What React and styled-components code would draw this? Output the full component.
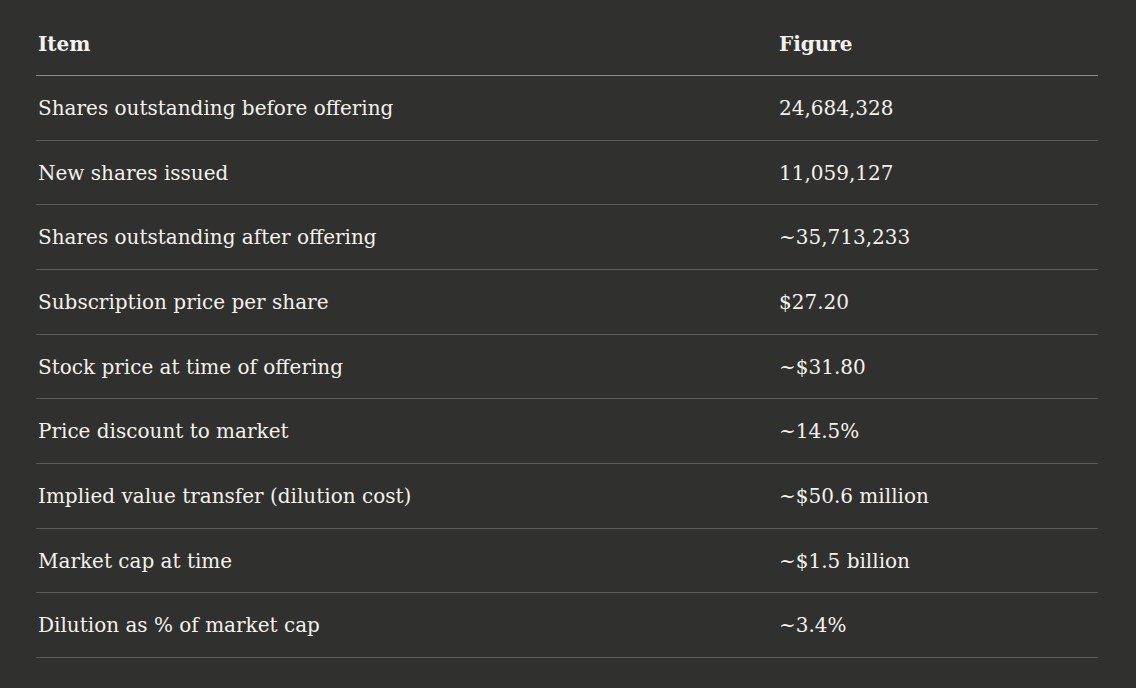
import React from 'react';
import styled, { createGlobalStyle } from 'styled-components';

const GlobalStyle = createGlobalStyle`
  html, body {
    margin: 0;
    padding: 0;
    background: #30302e;
  }
  body {
    font-family: "DejaVu Serif", "Liberation Serif", serif;
    color: #f4f2ec;
  }
`;

const Page = styled.div`
  min-height: 688px;
  padding: 11px 38px 0 36px;
  box-sizing: border-box;
`;

const Table = styled.table`
  width: 1062px;
  border-collapse: collapse;
  table-layout: fixed;
  font-size: 20px;
`;

const HeadCell = styled.th`
  text-align: left;
  font-weight: 700;
  padding: 17px 2px 15px;
  line-height: 32px;
  width: ${p => p.w || 'auto'};
  border-bottom: 1px solid #8d8c88;
`;

const Row = styled.tr`
  border-bottom: 1px solid #5c5b58;
`;

const Cell = styled.td`
  padding: 17px 2px 15px;
  line-height: 31.67px;
  font-weight: 400;
  white-space: nowrap;
`;

const rows = [
  ['Shares outstanding before offering', '24,684,328'],
  ['New shares issued', '11,059,127'],
  ['Shares outstanding after offering', '~35,713,233'],
  ['Subscription price per share', '$27.20'],
  ['Stock price at time of offering', '~$31.80'],
  ['Price discount to market', '~14.5%'],
  ['Implied value transfer (dilution cost)', '~$50.6 million'],
  ['Market cap at time', '~$1.5 billion'],
  ['Dilution as % of market cap', '~3.4%'],
];

export default function App() {
  return (
    <>
      <GlobalStyle />
      <Page>
        <Table>
          <thead>
            <tr>
              <HeadCell w="737px">Item</HeadCell>
              <HeadCell>Figure</HeadCell>
            </tr>
          </thead>
          <tbody>
            {rows.map(([item, figure]) => (
              <Row key={item}>
                <Cell>{item}</Cell>
                <Cell>{figure}</Cell>
              </Row>
            ))}
          </tbody>
        </Table>
      </Page>
    </>
  );
}
